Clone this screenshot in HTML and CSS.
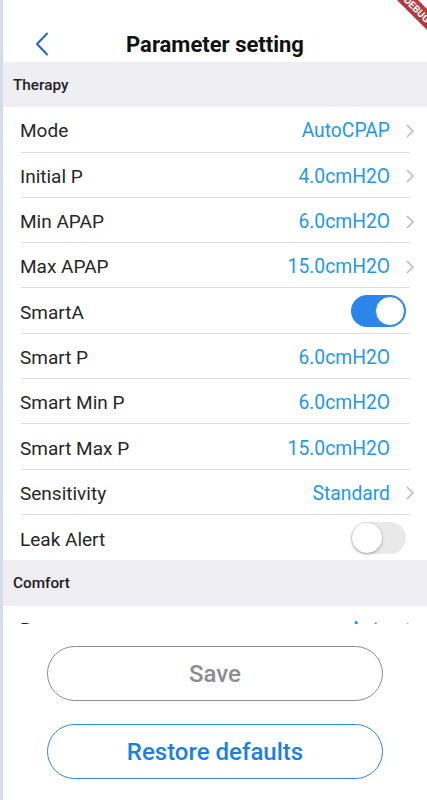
FILE: index.html
```html
<!DOCTYPE html>
<html lang="en">
<head>
	<meta charset="UTF-8">
	<title>Parameter setting</title>
	<link rel="stylesheet" href="styles.css">
</head>
<body>
	<div class="screen">
		<!-- debug ribbon in the corner -->
		<div class="debug-banner">DEBUG</div>

		<header class="topbar">
			<a class="back" href="#">
				<svg width="14" height="24" viewBox="0 0 14 24"><path d="M12 1.5 L2 12 L12 22.5" fill="none" stroke="#2563d9" stroke-width="2" stroke-linecap="round" stroke-linejoin="round"/></svg>
			</a>
			<h1 class="title">Parameter setting</h1>
		</header>

		<div class="list">
			<div class="section-title">Therapy</div>

			<div class="row">
				<span class="label">Mode</span>
				<span class="value">AutoCPAP</span>
				<svg class="chev" width="10" height="16" viewBox="0 0 10 16"><path d="M2 2 L8 8 L2 14" fill="none" stroke="#bcbcbc" stroke-width="1.6"/></svg>
			</div>
			<div class="row">
				<span class="label">Initial P</span>
				<span class="value">4.0cmH2O</span>
				<svg class="chev" width="10" height="16" viewBox="0 0 10 16"><path d="M2 2 L8 8 L2 14" fill="none" stroke="#bcbcbc" stroke-width="1.6"/></svg>
			</div>
			<div class="row">
				<span class="label">Min APAP</span>
				<span class="value">6.0cmH2O</span>
				<svg class="chev" width="10" height="16" viewBox="0 0 10 16"><path d="M2 2 L8 8 L2 14" fill="none" stroke="#bcbcbc" stroke-width="1.6"/></svg>
			</div>
			<div class="row">
				<span class="label">Max APAP</span>
				<span class="value">15.0cmH2O</span>
				<svg class="chev" width="10" height="16" viewBox="0 0 10 16"><path d="M2 2 L8 8 L2 14" fill="none" stroke="#bcbcbc" stroke-width="1.6"/></svg>
			</div>
			<div class="row">
				<span class="label">SmartA</span>
				<span class="switch on"><span class="knob"></span></span>
			</div>
			<div class="row">
				<span class="label">Smart P</span>
				<span class="value">6.0cmH2O</span>
				<span class="chev blank"></span>
			</div>
			<div class="row">
				<span class="label">Smart Min P</span>
				<span class="value">6.0cmH2O</span>
				<span class="chev blank"></span>
			</div>
			<div class="row">
				<span class="label">Smart Max P</span>
				<span class="value">15.0cmH2O</span>
				<span class="chev blank"></span>
			</div>
			<div class="row">
				<span class="label">Sensitivity</span>
				<span class="value">Standard</span>
				<svg class="chev" width="10" height="16" viewBox="0 0 10 16"><path d="M2 2 L8 8 L2 14" fill="none" stroke="#bcbcbc" stroke-width="1.6"/></svg>
			</div>
			<div class="row last">
				<span class="label">Leak Alert</span>
				<span class="switch"><span class="knob"></span></span>
			</div>

			<div class="section-title">Comfort</div>

			<div class="row">
				<span class="label">Ramp</span>
				<span class="value">Auto</span>
				<svg class="chev" width="10" height="16" viewBox="0 0 10 16"><path d="M2 2 L8 8 L2 14" fill="none" stroke="#bcbcbc" stroke-width="1.6"/></svg>
			</div>
		</div>

		<div class="actions">
			<button class="btn btn-save">Save</button>
			<button class="btn btn-restore">Restore defaults</button>
		</div>
	</div>
</body>
</html>
```

FILE: styles.css
```css
body { margin: 0; background: #fff; font-family: Roboto, "Noto Sans", sans-serif; }

.screen { position: relative; width: 427px; height: 800px; overflow: hidden; box-sizing: border-box; border-left: 3px solid #d3ddee; background: #fff; }

.debug-banner { position: absolute; top: 2px; right: -32px; width: 84px; height: 15px; background: #b3393b; color: #fff; font-size: 10px; font-weight: 700; line-height: 15px; text-align: center; transform: rotate(45deg); }

/* header */
.topbar { display: flex; align-items: center; height: 62px; padding-top: 26px; box-sizing: border-box; position: relative; }
.back { display: flex; margin-left: 32px; }
.title { margin: 0; position: absolute; left: 0; right: 0; top: 27px; text-align: center; font-size: 22px; font-weight: 700; line-height: 36px; color: #111; pointer-events: none; }

/* list */
.list { height: 562px; overflow: hidden; }
.section-title { height: 45.3px; line-height: 46px; padding-left: 10px; background: #eeeef3; font-size: 15.3px; font-weight: 500; color: #222; }
.row { display: flex; align-items: center; height: 45.3px; box-sizing: border-box; padding-top: 3px; margin: 0 17px 0 18px; border-bottom: 1px solid #dedede; }
.row.last { border-bottom: none; }
.label { flex: 1; margin-left: -1px; font-size: 19px; color: #262626; }
.value { font-size: 19.3px; color: #1e98ea; }
.chev { width: 10px; height: 16px; margin-left: 15px; margin-right: -5px; }
.chev.blank { display: inline-block; }

/* switches */
.switch { position: relative; width: 55px; height: 32px; margin-top: -3px; border-radius: 16px; background: #e9e9ea; margin-right: 4px; }
.switch .knob { position: absolute; top: 1px; left: 1px; width: 30px; height: 30px; border-radius: 50%; background: #fff; box-shadow: 0 1px 3px rgba(0,0,0,0.35); }
.switch.on { background: #2a86ea; }
.switch.on .knob { left: auto; right: 1px; box-shadow: none; border: 1px solid #2a86ea; width: 28px; height: 28px; top: 1px; }

/* bottom buttons */
.actions { display: flex; flex-direction: column; align-items: center; gap: 23px; padding-top: 22px; }
.btn { width: 336px; height: 55px; border-radius: 28px; background: #fff; font-family: Roboto, "Noto Sans", sans-serif; font-size: 24px; font-weight: 500; }
.btn-save { border: 1.5px solid #8c8c8c; color: #8d8d8d; }
.btn-restore { border: 1.5px solid #2a88ea; color: #1d7fe2; }
```
